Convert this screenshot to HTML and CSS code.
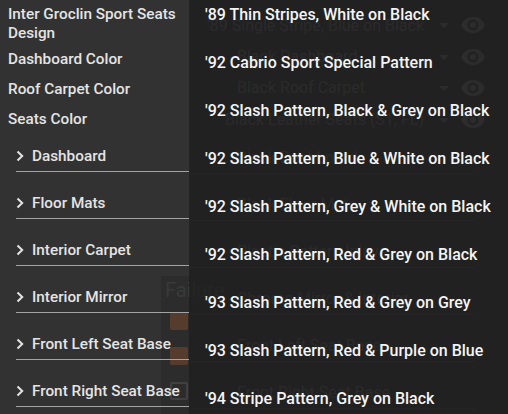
FILE: index.html
```html
<!DOCTYPE html>
<html>
<head>
<meta charset="utf-8">
<link rel="stylesheet" href="styles.css">
</head>
<body>
<div class="under">
  <div class="g-left"></div>
  <div class="g-card">
    <div class="g-card-title">Failure</div>
    <div class="g-check on"></div>
    <div class="g-check on"></div>
    <div class="g-check"></div>
    <div class="g-check on last"></div>
  </div>
  <div class="g-main">
    <div class="g-row r1"><span class="g-text">'89 Single Stripe, Blue on Black</span><span class="g-icons"><svg viewBox="0 0 24 24" class="g-tri"><path d="M7 10l5 5 5-5z"/></svg><svg viewBox="0 0 24 24" class="g-eye"><path d="M12 4.5C7 4.5 2.73 7.61 1 12c1.73 4.39 6 7.5 11 7.5s9.27-3.11 11-7.5c-1.73-4.39-6-7.5-11-7.5zM12 17c-2.76 0-5-2.24-5-5s2.24-5 5-5 5 2.24 5 5-2.24 5-5 5zm0-8c-1.66 0-3 1.34-3 3s1.34 3 3 3 3-1.34 3-3-1.34-3-3-3z"/></svg></span></div>
    <div class="g-row r2"><span class="g-text ind">Black Dashboard</span><span class="g-icons"><svg viewBox="0 0 24 24" class="g-tri"><path d="M7 10l5 5 5-5z"/></svg><svg viewBox="0 0 24 24" class="g-eye"><path d="M12 4.5C7 4.5 2.73 7.61 1 12c1.73 4.39 6 7.5 11 7.5s9.27-3.11 11-7.5c-1.73-4.39-6-7.5-11-7.5zM12 17c-2.76 0-5-2.24-5-5s2.24-5 5-5 5 2.24 5 5-2.24 5-5 5zm0-8c-1.66 0-3 1.34-3 3s1.34 3 3 3 3-1.34 3-3-1.34-3-3-3z"/></svg></span></div>
    <div class="g-row r3"><span class="g-text ind">Black Roof Carpet</span><span class="g-icons"><svg viewBox="0 0 24 24" class="g-tri"><path d="M7 10l5 5 5-5z"/></svg><svg viewBox="0 0 24 24" class="g-eye"><path d="M12 4.5C7 4.5 2.73 7.61 1 12c1.73 4.39 6 7.5 11 7.5s9.27-3.11 11-7.5c-1.73-4.39-6-7.5-11-7.5zM12 17c-2.76 0-5-2.24-5-5s2.24-5 5-5 5 2.24 5 5-2.24 5-5 5zm0-8c-1.66 0-3 1.34-3 3s1.34 3 3 3 3-1.34 3-3-1.34-3-3-3z"/></svg></span></div>
    <div class="g-row r4"><span class="g-text ind2">Black Leather Seats (S1, FL)</span><span class="g-icons"><svg viewBox="0 0 24 24" class="g-tri"><path d="M7 10l5 5 5-5z"/></svg><svg viewBox="0 0 24 24" class="g-eye"><path d="M12 4.5C7 4.5 2.73 7.61 1 12c1.73 4.39 6 7.5 11 7.5s9.27-3.11 11-7.5c-1.73-4.39-6-7.5-11-7.5zM12 17c-2.76 0-5-2.24-5-5s2.24-5 5-5 5 2.24 5 5-2.24 5-5 5zm0-8c-1.66 0-3 1.34-3 3s1.34 3 3 3 3-1.34 3-3-1.34-3-3-3z"/></svg></span></div>
    <div class="g-acc"><span class="g-text ind">Black Dashboard</span></div>
    <div class="g-acc"><span class="g-text ind">Black Floor Mats</span></div>
    <div class="g-acc"><span class="g-text ind">Plastic Pattern Inlays</span></div>
    <div class="g-acc"><span class="g-text ind">Chrome Mirror &amp; Interior</span></div>
    <div class="g-acc"><span class="g-text ind">Front Left Seat Base</span></div>
    <div class="g-acc"><span class="g-text ind">Front Right Seat Base</span></div>
  </div>
</div>

<aside class="drawer">
  <div class="opt first">Inter Groclin Sport Seats Design</div>
  <div class="opt">Dashboard Color</div>
  <div class="opt">Roof Carpet Color</div>
  <div class="opt">Seats Color</div>
  <div class="acc-list">
    <div class="acc"><svg class="chev" viewBox="0 0 8 12"><polyline points="1.5,1.5 6.2,6 1.5,10.5"/></svg><span>Dashboard</span></div>
    <div class="acc"><svg class="chev" viewBox="0 0 8 12"><polyline points="1.5,1.5 6.2,6 1.5,10.5"/></svg><span>Floor Mats</span></div>
    <div class="acc"><svg class="chev" viewBox="0 0 8 12"><polyline points="1.5,1.5 6.2,6 1.5,10.5"/></svg><span>Interior Carpet</span></div>
    <div class="acc"><svg class="chev" viewBox="0 0 8 12"><polyline points="1.5,1.5 6.2,6 1.5,10.5"/></svg><span>Interior Mirror</span></div>
    <div class="acc"><svg class="chev" viewBox="0 0 8 12"><polyline points="1.5,1.5 6.2,6 1.5,10.5"/></svg><span>Front Left Seat Base</span></div>
    <div class="acc"><svg class="chev" viewBox="0 0 8 12"><polyline points="1.5,1.5 6.2,6 1.5,10.5"/></svg><span>Front Right Seat Base</span></div>
  </div>
</aside>

<div class="menu">
  <ul class="menu-list">
    <li>'89 Thin Stripes, White on Black</li>
    <li>'92 Cabrio Sport Special Pattern</li>
    <li>'92 Slash Pattern, Black &amp; Grey on Black</li>
    <li>'92 Slash Pattern, Blue &amp; White on Black</li>
    <li>'92 Slash Pattern, Grey &amp; White on Black</li>
    <li>'92 Slash Pattern, Red &amp; Grey on Black</li>
    <li>'93 Slash Pattern, Red &amp; Grey on Grey</li>
    <li>'93 Slash Pattern, Red &amp; Purple on Blue</li>
    <li>'94 Stripe Pattern, Grey on Black</li>
  </ul>
</div>
</body>
</html>
```

FILE: styles.css
```css
html, body {
  margin: 0;
  padding: 0;
}
body {
  width: 508px;
  height: 414px;
  overflow: hidden;
  position: relative;
  background: #212121;
  font-family: Roboto, "Liberation Sans", sans-serif;
}

/* ---------- underlying page (dimmed) ---------- */
.under {
  display: flex;
  height: 414px;
  overflow: hidden;
}
.g-left {
  width: 161px;
  flex: none;
  background: #323232;
}
.g-card {
  width: 29px;
  height: 414px;
  flex: none;
  display: flex;
  flex-direction: column;
  align-items: flex-start;
  padding-top: 276px;
  box-sizing: border-box;
  box-shadow: inset 0 276px 0 #323232, inset 0 -200px 0 #1c1c1c;
  position: relative;
  z-index: 0;
}
.g-card-title {
  padding-left: 4px;
  font-size: 20px;
  line-height: 28px;
  color: #4e4e4e;
  white-space: nowrap;
}
.g-check {
  width: 14px;
  height: 14px;
  margin: 8px 0 9px 9px;
  border: 2px solid #6a6a6a;
  border-radius: 2px;
  flex: none;
}
.g-check.on {
  background: #bb5b1f;
  border-color: #bb5b1f;
}
.g-check.last {
  height: 4px;
  margin-bottom: 0;
  border-radius: 2px 2px 0 0;
  border-bottom: 0;
}
.g-main {
  flex: 1;
  display: flex;
  flex-direction: column;
  padding-top: 9px;
}
.g-row {
  display: flex;
  align-items: center;
  height: 31px;
}
.g-row.r1 { height: 32px; }
.g-row.r4 { height: 33px; }
.g-text {
  font-size: 16px;
  color: #7e7e7e;
  white-space: nowrap;
  padding-left: 17px;
}
.g-text.ind { padding-left: 47px; }
.g-text.ind2 { padding-left: 35px; }
.g-icons {
  margin-left: auto;
  margin-right: 22px;
  display: flex;
  align-items: center;
  gap: 4px;
}
.g-tri {
  width: 24px;
  height: 24px;
  fill: #8a8a8a;
}
.g-eye {
  width: 26px;
  height: 26px;
  fill: #929292;
}
.g-acc {
  height: 47px;
  border-bottom: 1px solid #4e4e4e;
  margin-right: 32px;
  display: flex;
  align-items: flex-end;
  padding-bottom: 6px;
  box-sizing: border-box;
}
.g-acc:nth-child(5) {
  height: 38px;
}
.g-acc .g-text {
  line-height: 18px;
}

/* ---------- drawer ---------- */
.drawer {
  position: absolute;
  left: 0;
  top: 0;
  width: 189px;
  height: 414px;
  background: rgba(50, 50, 50, 0.74);
  color: #e4e4e4;
  font-size: 15.3px;
  font-weight: 500;
}
.opt {
  padding-left: 8px;
  height: 30px;
  line-height: 30px;
  white-space: nowrap;
}
.opt.first {
  padding-top: 5px;
  margin-bottom: 1px;
  height: auto;
  line-height: 19px;
  white-space: normal;
}
.acc-list {
  display: flex;
  flex-direction: column;
}
.acc {
  margin-left: 16px;
  height: 47px;
  box-sizing: border-box;
  border-bottom: 1px solid #a3a3a3;
  display: flex;
  align-items: flex-end;
  padding-bottom: 6px;
  line-height: 18px;
  white-space: nowrap;
}
.acc:first-child {
  height: 38px;
}
.chev {
  width: 8px;
  height: 12px;
  margin: 0 8px 3px 0;
  flex: none;
  fill: none;
  stroke: #e4e4e4;
  stroke-width: 2;
}

/* ---------- dropdown menu ---------- */
.menu {
  position: absolute;
  left: 189px;
  top: 0;
  right: 0;
  height: 414px;
  overflow: hidden;
  background: rgba(33, 33, 33, 0.9);
}
.menu-list {
  list-style: none;
  margin: -9px 0 0;
  padding: 0;
}
.menu-list li {
  height: 48px;
  line-height: 48px;
  padding-left: 16px;
  font-size: 16px;
  font-weight: 500;
  color: #f4f4f4;
  white-space: nowrap;
}
```
